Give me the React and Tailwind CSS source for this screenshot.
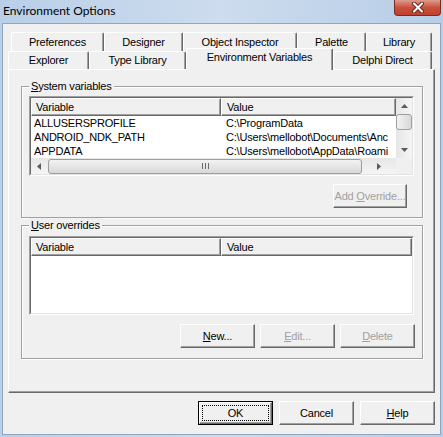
import React from 'react';

const raised =
  'border border-t-white border-l-white border-r-[#696969] border-b-[#696969] shadow-[inset_-1px_-1px_0_#a0a0a0]';

function Btn({ children, disabled, className = '' }) {
  return (
    <div
      className={`h-[24px] flex items-center justify-center bg-[#f0f0f0] whitespace-nowrap ${raised} ${
        disabled ? 'text-[#a0a0a0]' : 'text-black'
      } ${className}`}
    >
      {children}
    </div>
  );
}

function Arrow({ dir }) {
  const pts = {
    up: '0,4 3.5,0 7,4',
    down: '0,0 3.5,4 7,0',
    left: '4,0 0,3.5 4,7',
    right: '0,0 4,3.5 0,7',
  }[dir];
  const vertical = dir === 'up' || dir === 'down';
  return (
    <svg width={vertical ? 7 : 4} height={vertical ? 4 : 7}>
      <polygon points={pts} fill="#5a5a5a" />
    </svg>
  );
}

function Sunken({ className = '', children }) {
  return (
    <div
      className={`border border-t-[#a0a0a0] border-l-[#a0a0a0] border-r-white border-b-white ${className}`}
    >
      <div className="w-full h-full border border-t-[#696969] border-l-[#696969] border-r-[#e3e3e3] border-b-[#e3e3e3] bg-white flex overflow-hidden">
        {children}
      </div>
    </div>
  );
}

function ListHeader() {
  return (
    <div className="h-[18px] flex shrink-0">
      <div className={`w-[190px] bg-[#f0f0f0] ${raised} flex items-center pl-[4px]`}>Variable</div>
      <div className={`flex-1 bg-[#f0f0f0] ${raised} flex items-center pl-[5px]`}>Value</div>
    </div>
  );
}

const rows = [
  ['ALLUSERSPROFILE', 'C:\\ProgramData'],
  ['ANDROID_NDK_PATH', 'C:\\Users\\mellobot\\Documents\\Anc'],
  ['APPDATA', 'C:\\Users\\mellobot\\AppData\\Roami'],
];

function GroupBox({ label, className = '', children }) {
  return (
    <div
      className={`relative border border-[#a0a0a0] shadow-[inset_1px_1px_0_#fff,1px_1px_0_#fff] ${className}`}
    >
      <div className="absolute left-[7px] top-[-8px] px-[2px] bg-[#f0f0f0] leading-[14px]">{label}</div>
      {children}
    </div>
  );
}

function Tab({ w, children, selected }) {
  if (selected) {
    return (
      <div
        className={`relative z-10 -mt-[3px] h-[22px] bg-[#f0f0f0] border-l border-t border-r border-l-white border-t-white border-r-[#696969] shadow-[inset_-1px_0_0_#a0a0a0] rounded-t-[2px] flex justify-center pt-[3px] ${w}`}
      >
        {children}
      </div>
    );
  }
  return (
    <div
      className={`h-full bg-[#f0f0f0] border-l border-t border-r border-l-white border-t-white border-r-[#696969] shadow-[inset_-1px_0_0_#a0a0a0] rounded-t-[2px] flex items-center justify-center ${w}`}
    >
      {children}
    </div>
  );
}

export default function App() {
  return (
    <div
      className="w-[443px] h-[437px] relative overflow-hidden bg-gradient-to-r from-[#b9cfe8] via-[#cddcee] to-[#b7cde7] text-[11px] leading-none tracking-[-0.2px] text-black"
      style={{ fontFamily: '"Liberation Sans", Arial, sans-serif' }}
    >
      {/* title bar */}
      <div className="h-[23px] flex items-center pl-[3px] pb-[2px]">
        <span
          className="text-[12px] tracking-normal text-black"
          style={{ fontFamily: 'Lato, "Liberation Sans", sans-serif' }}
        >
          Environment Options
        </span>
      </div>
      <div className="absolute right-[2px] top-0 w-[47px] h-[16px] rounded-b-[4px] border border-t-0 border-[#7a2a20] bg-gradient-to-b from-[#dc9b8e] via-[#c9503c] to-[#c0402c] flex items-center justify-center">
        <svg width="14" height="11" viewBox="0 0 14 11">
          <path d="M3 1.5 L11 9.5 M11 1.5 L3 9.5" stroke="#6b2a22" strokeWidth="4" strokeLinecap="round" />
          <path d="M3 1.5 L11 9.5 M11 1.5 L3 9.5" stroke="#ffffff" strokeWidth="2" strokeLinecap="round" />
        </svg>
      </div>

      {/* client area */}
      <div className="mx-[2px] h-[412px] border border-[#8fa5c0] bg-[#f0f0f0] flex flex-col pt-[8px]">
        {/* tabs */}
        <div className="h-[19px] flex ml-[8px]">
          <Tab w="w-[93px]">Preferences</Tab>
          <Tab w="w-[79px]">Designer</Tab>
          <Tab w="w-[114px]">Object Inspector</Tab>
          <Tab w="w-[69px]">Palette</Tab>
          <Tab w="w-[66px]">Library</Tab>
        </div>
        <div className="h-[18px] flex ml-[5px]">
          <Tab w="w-[81px]">Explorer</Tab>
          <Tab w="w-[97px]">Type Library</Tab>
          <Tab w="w-[147px]" selected>
            Environment Variables
          </Tab>
          <Tab w="w-[99px]">Delphi Direct</Tab>
        </div>

        {/* page */}
        <div className={`ml-[5px] w-[427px] h-[324px] bg-[#f0f0f0] ${raised} pl-[12px] pt-[16px]`}>
          <GroupBox
            className="w-[402px] h-[132px] pl-[7px] pt-[9px] flex flex-col"
            label={
              <>
                <span className="underline">S</span>ystem variables
              </>
            }
          >
            <Sunken className="w-[385px] h-[80px]">
              <div className="flex-1 flex flex-col min-w-0">
                <ListHeader />
                {rows.map(([k, v]) => (
                  <div key={k} className="h-[14px] flex items-center whitespace-nowrap">
                    <div className="w-[190px] pl-[3px] shrink-0">{k}</div>
                    <div className="pl-[5px] overflow-hidden">{v}</div>
                  </div>
                ))}
                <div className="h-[16px] flex items-center bg-gradient-to-b from-[#e6e6e6] to-[#f5f5f5] mt-auto">
                  <div className="w-[16px] flex justify-center">
                    <Arrow dir="left" />
                  </div>
                  <div className="ml-[1px] w-[314px] h-[15px] rounded-[3px] border border-[#9e9e9e] bg-gradient-to-b from-[#f3f3f3] to-[#d8d8d8] flex items-center justify-center">
                    <svg width="7" height="6">
                      <path d="M0.5 0 V6 M3.5 0 V6 M6.5 0 V6" stroke="#6a6a6a" />
                    </svg>
                  </div>
                  <div className="flex-1 flex justify-center">
                    <Arrow dir="right" />
                  </div>
                </div>
              </div>
              <div className="w-[16px] flex flex-col shrink-0">
                <div className="h-[60px] flex flex-col bg-gradient-to-r from-[#e6e6e6] to-[#f5f5f5]">
                  <div className="h-[16px] flex items-center justify-center">
                    <Arrow dir="up" />
                  </div>
                  <div className="h-[16px] rounded-[3px] border border-[#9e9e9e] bg-gradient-to-r from-[#f3f3f3] to-[#d8d8d8]" />
                  <div className="flex-1" />
                  <div className="h-[16px] flex items-center justify-center">
                    <Arrow dir="down" />
                  </div>
                </div>
                <div className="flex-1 bg-[#f0f0f0]" />
              </div>
            </Sunken>
            <div className="mt-[8px] flex justify-end w-[385px] pr-[7px]">
              <Btn disabled className="w-[74px]">
                Add&nbsp;<span className="underline">O</span>verride...
              </Btn>
            </div>
          </GroupBox>

          <GroupBox
            className="mt-[7px] w-[402px] h-[134px] pl-[7px] pt-[10px] flex flex-col"
            label={
              <>
                <span className="underline">U</span>ser overrides
              </>
            }
          >
            <Sunken className="w-[385px] h-[79px]">
              <div className="flex-1 flex flex-col">
                <ListHeader />
              </div>
            </Sunken>
            <div className="mt-[9px] ml-[151px] flex gap-[5px]">
              <Btn className="w-[75px]">
                <span className="underline">N</span>ew...
              </Btn>
              <Btn disabled className="w-[75px]">
                <span className="underline">E</span>dit...
              </Btn>
              <Btn disabled className="w-[75px]">
                <span className="underline">D</span>elete
              </Btn>
            </div>
          </GroupBox>
        </div>

        {/* dialog buttons */}
        <div className="mt-[8px] flex justify-end pr-[5px] gap-[6px]">
          <div className="w-[75px] h-[24px] border border-black">
            <div className={`w-full h-full ${raised} p-[2px]`}>
              <div className="w-full h-full border border-dotted border-black flex items-center justify-center">
                OK
              </div>
            </div>
          </div>
          <Btn className="w-[75px]">Cancel</Btn>
          <Btn className="w-[75px]">
            <span className="underline">H</span>elp
          </Btn>
        </div>
      </div>
    </div>
  );
}
